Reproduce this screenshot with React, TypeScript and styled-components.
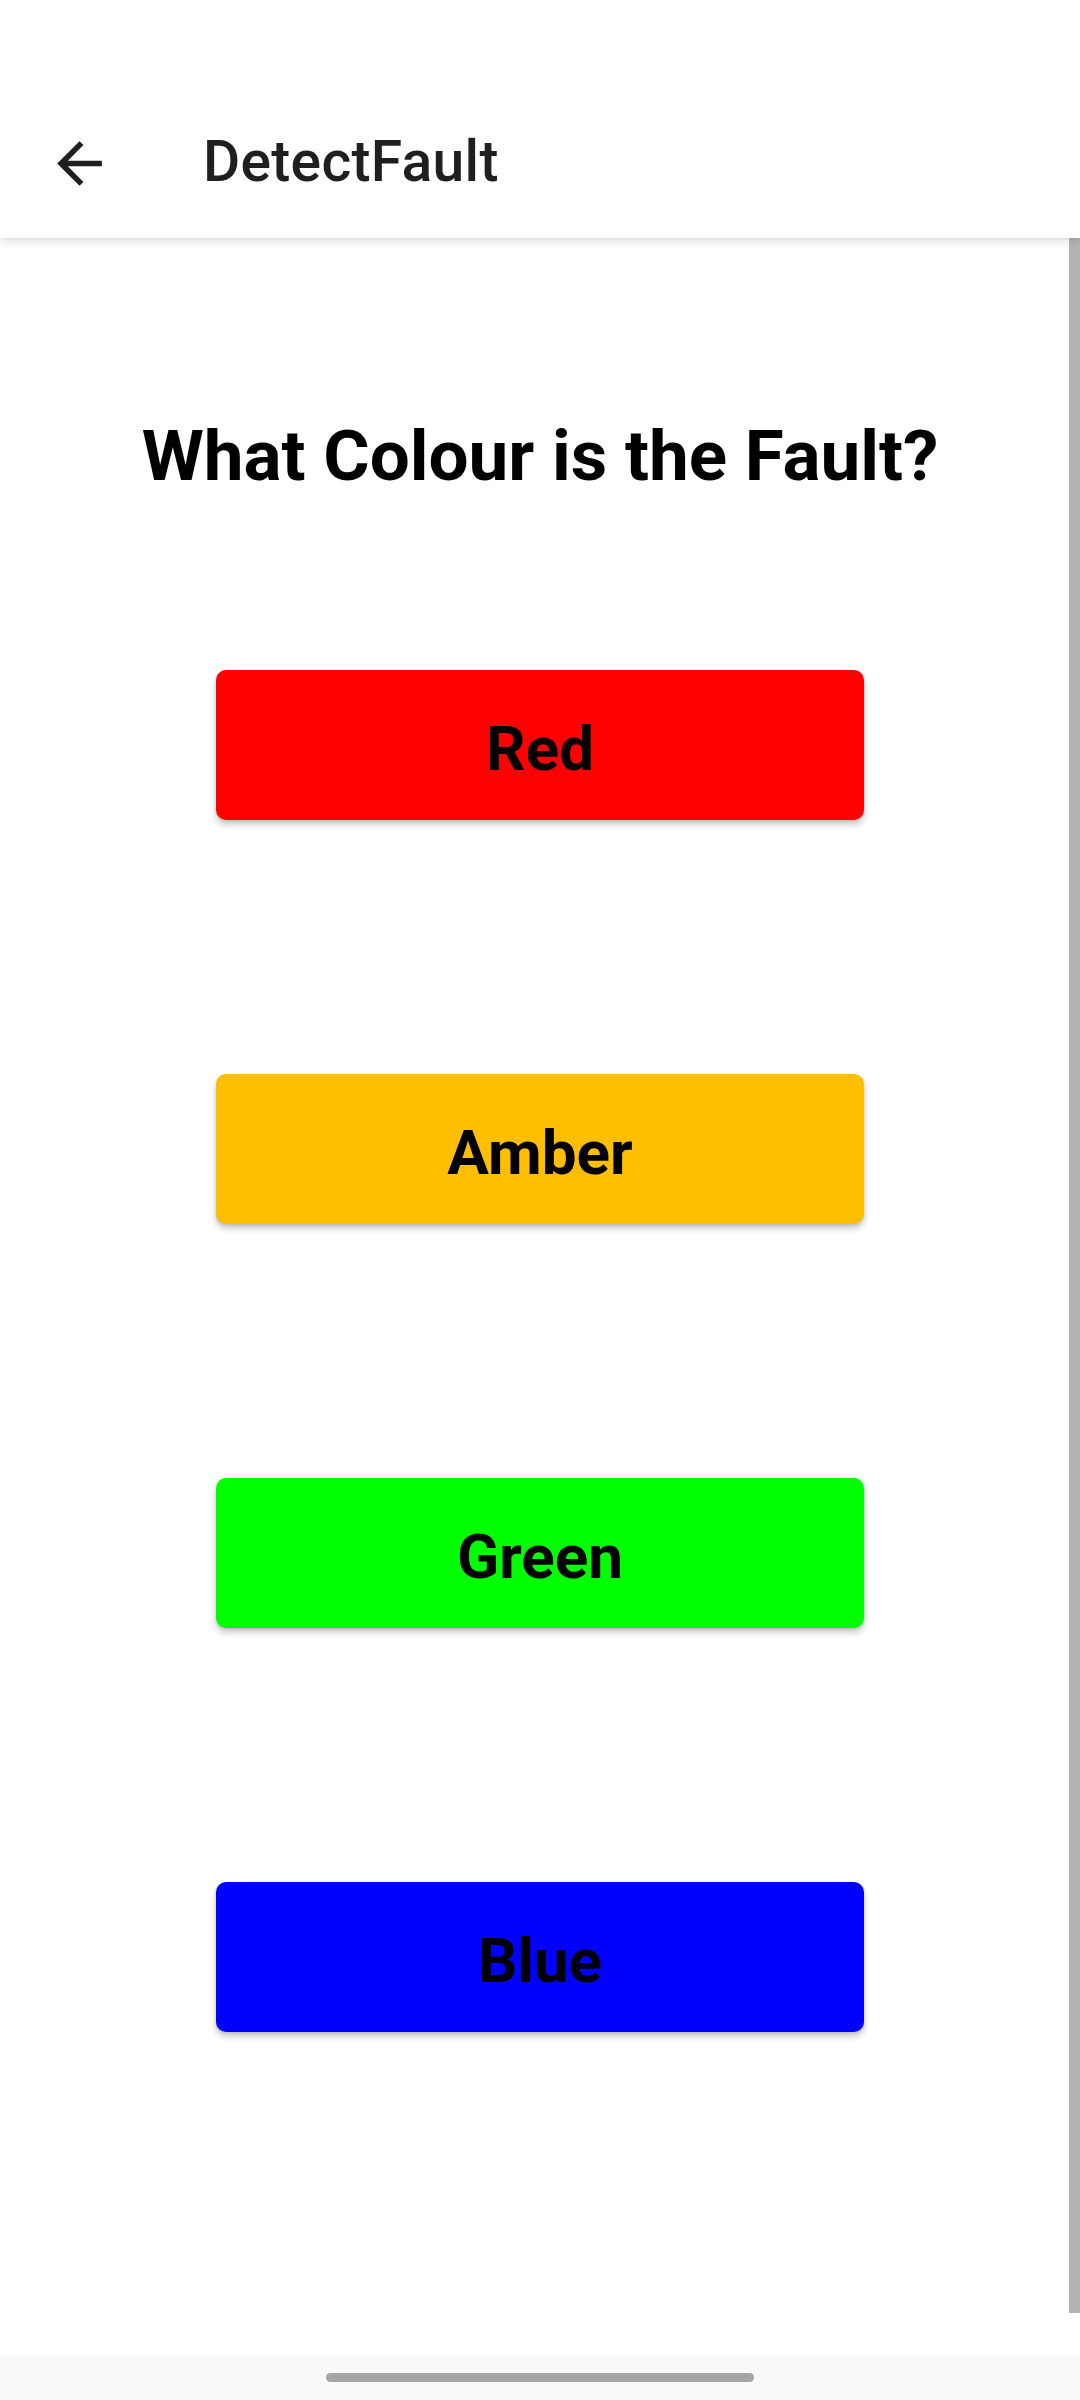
import React from 'react';
import styled, { createGlobalStyle } from 'styled-components';

const GlobalStyle = createGlobalStyle`
  html, body {
    margin: 0;
    padding: 0;
    background: #ffffff;
  }
  body {
    font-family: Roboto, "Liberation Sans", sans-serif;
  }
`;

type Choice = {
  label: string;
  color: string;
};

const choices: Choice[] = [
  { label: 'Red', color: '#ff0000' },
  { label: 'Amber', color: '#ffbf00' },
  { label: 'Green', color: '#00ff00' },
  { label: 'Blue', color: '#0000ff' },
];

function BackArrow() {
  return (
    <svg width="67" height="67" viewBox="0 0 24 24" fill="#1f1f1f">
      <path d="M20 11H7.83l5.59-5.59L12 4l-8 8 8 8 1.41-1.41L7.83 13H20v-2z" />
    </svg>
  );
}

export default function App() {
  return (
    <Screen>
      <GlobalStyle />
      <Header>
        <StatusBar />
        <Toolbar>
          <NavButton aria-label="Back">
            <BackArrow />
          </NavButton>
          <ToolbarTitle>DetectFault</ToolbarTitle>
        </Toolbar>
      </Header>
      <Body>
        <Question>What Colour is the Fault?</Question>
        <ChoiceList>
          {choices.map((c) => (
            <ChoiceButton key={c.label} $bg={c.color}>
              {c.label}
            </ChoiceButton>
          ))}
        </ChoiceList>
        <ScrollThumb />
      </Body>
      <NavBar>
        <HomePill />
      </NavBar>
    </Screen>
  );
}

const Screen = styled.div`
  width: 1080px;
  height: 2400px;
  display: flex;
  flex-direction: column;
  background: #ffffff;
  overflow: hidden;
`;

const Header = styled.header`
  background: #ffffff;
  position: relative;
  z-index: 2;
  box-shadow: 0 3px 10px rgba(0, 0, 0, 0.12), 0 1px 3px rgba(0, 0, 0, 0.06);
`;

const StatusBar = styled.div`
  height: 88px;
`;

const Toolbar = styled.div`
  height: 150px;
  display: flex;
  align-items: center;
`;

const NavButton = styled.button`
  width: 158px;
  height: 150px;
  padding: 0 0 0 46px;
  margin: 0;
  border: none;
  background: none;
  display: flex;
  align-items: center;
  justify-content: flex-start;
  flex-shrink: 0;
  box-sizing: border-box;
`;

const ToolbarTitle = styled.h1`
  margin: 0 0 0 45px;
  font-family: Roboto, "Liberation Sans", sans-serif;
  font-size: 57px;
  font-weight: 500;
  letter-spacing: 0.3px;
  color: #1f1f1f;
  line-height: 1;
  position: relative;
  top: -2px;
`;

const Body = styled.main`
  flex: 1;
  position: relative;
  display: flex;
  flex-direction: column;
  align-items: center;
  padding-top: 176px;
`;

const Question = styled.h2`
  margin: 0;
  font-family: Roboto, "Liberation Sans", sans-serif;
  font-size: 71px;
  font-weight: 700;
  color: #000000;
  line-height: 84px;
  text-align: center;
`;

const ChoiceList = styled.div`
  margin-top: 172px;
  display: flex;
  flex-direction: column;
  gap: 254px;
`;

const ChoiceButton = styled.button<{ $bg: string }>`
  width: 648px;
  height: 150px;
  padding: 6px 0 0;
  border: none;
  border-radius: 10px;
  background: ${(p) => p.$bg};
  color: #000000;
  font-family: Roboto, "Liberation Sans", sans-serif;
  font-size: 62px;
  font-weight: 700;
  box-shadow: 0 5px 6px rgba(0, 0, 0, 0.2), 0 1px 3px rgba(0, 0, 0, 0.12);
  cursor: pointer;
`;

const ScrollThumb = styled.div`
  position: absolute;
  top: 0;
  right: 0;
  width: 11px;
  height: 2075px;
  background: #b4b4b4;
`;

const NavBar = styled.footer`
  height: 45px;
  background: #f9f9f9;
  display: flex;
  justify-content: center;
  padding-top: 18px;
  box-sizing: border-box;
`;

const HomePill = styled.div`
  width: 428px;
  height: 9px;
  border-radius: 5px;
  background: #a5a5a5;
`;
